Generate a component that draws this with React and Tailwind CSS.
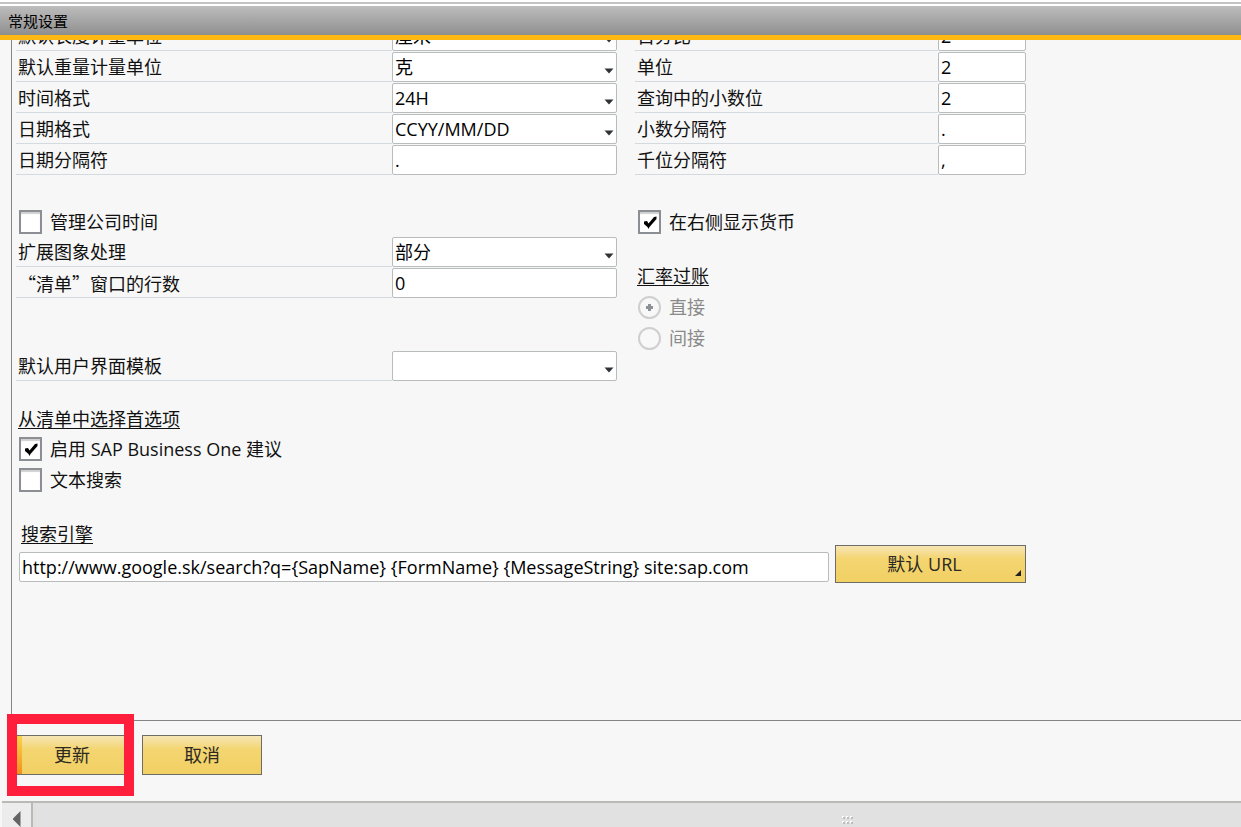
import React from 'react';

const displayRows = [
    { id: 'length_unit', title: '默认长度计量单位', value: '厘米', select: true },
    { id: 'weight_unit', title: '默认重量计量单位', value: '克', select: true },
    { id: 'time_format', title: '时间格式', value: '24H', select: true },
    { id: 'date_format', title: '日期格式', value: 'CCYY/MM/DD', select: true },
    { id: 'date_separator', title: '日期分隔符', value: '.' },
];

const decimalRows = [
    { id: 'percent', title: '百分比', value: '2' },
    { id: 'units', title: '单位', value: '2' },
    { id: 'query_decimals', title: '查询中的小数位', value: '2' },
    { id: 'decimal_separator', title: '小数分隔符', value: '.' },
    { id: 'thousands_separator', title: '千位分隔符', value: ',' },
];

const field = 'block h-[30px] w-full rounded-xs border border-[#b9bcbc] bg-white pl-[2px] text-black outline-none focus:border-[#fdb813]';

function Row({ id, title, value, select, narrow, wide }) {
    return (
        <div className="mb-px flex h-[30px]">
            <label
                htmlFor={id}
                className={`flex-1 border-b border-[#d3dbe1] pl-[2px] leading-[30px] whitespace-nowrap ${wide ? 'font-["Noto_Sans_CJK_SC",sans-serif]' : ''}`}
            >
                {title}
            </label>
            <div className={`relative ${narrow ? 'w-[88px]' : 'w-[225px]'}`}>
                {select ? (
                    <>
                        <select id={id} defaultValue={value} className={`${field} appearance-none`}>
                            <option value={value}>{value}</option>
                        </select>
                        <svg className="pointer-events-none absolute right-[3px] bottom-2" width="10" height="6" viewBox="0 0 10 6">
                            <path d="M0.5 0.5h9L5 5.5z" fill="#2f3237" />
                        </svg>
                    </>
                ) : (
                    <input id={id} type="text" defaultValue={value} className={field} />
                )}
            </div>
        </div>
    );
}

function Check({ id, title, checked }) {
    return (
        <div className="flex h-[30px] items-center gap-2 pl-[3px]">
            <div className="relative h-6 w-[23px]">
                <input
                    id={id}
                    type="checkbox"
                    defaultChecked={checked}
                    className="peer block h-6 w-[23px] appearance-none border-2 border-[#8b8f93] bg-white inset-shadow-[0_2px_1px_#d0d0d0]"
                />
                <svg className="pointer-events-none absolute top-[6px] left-[5px] hidden peer-checked:block" width="14" height="14" viewBox="0 0 14 14">
                    <path d="M1 5.5L4 5L5.5 7.5L11 1L13.5 0.5V3L6.5 11L5.5 13L4.5 11L1 8z" fill="#000" />
                </svg>
            </div>
            <label htmlFor={id}>{title}</label>
        </div>
    );
}

function Radio({ id, title, checked }) {
    return (
        <div className="mb-px flex h-[30px] items-center gap-2 pl-[3px] text-[#8a8a8a]">
            <div className="relative h-[23px] w-[23px]">
                <input
                    id={id}
                    name="rate_posting"
                    type="radio"
                    disabled
                    defaultChecked={checked}
                    className="peer block h-[23px] w-[23px] appearance-none rounded-full border-2 border-[#cfcfcf] bg-[#f8f8f8]"
                />
                <svg className="pointer-events-none absolute top-[7px] left-[7px] hidden peer-checked:block" width="9" height="9" viewBox="0 0 9 9">
                    <path d="M3 1h3v2h2v3H6v2H3V6H1V3h2z" fill="#8d9094" />
                </svg>
            </div>
            <label htmlFor={id}>{title}</label>
        </div>
    );
}

const button = 'relative border border-[#6d6c66] bg-linear-to-b from-[#f6e6b4] via-[#f4d570] via-35% to-[#f1d064] text-[#2c2a22]';

export default function App() {
    return (
        <div className="flex min-h-screen flex-col overflow-hidden bg-[#f7f7f7] font-['Open_Sans','Noto_Sans_CJK_SC',sans-serif] text-[18px] text-[#111]">
            <header className="border-b-5 border-[#fdb813] bg-white">
                <div className="mt-[2px] h-[2px] bg-[#c3c3c3]" />
                <h1 className="mt-[2px] bg-linear-to-b from-[#bdbdbd] to-[#8f8f8f] pt-[2px] pl-2 text-[15px] leading-[27px] text-black">常规设置</h1>
            </header>

            <main className="ml-[11px] flex-1 overflow-hidden border-b border-l border-[#858585] pl-1">
                {/* the list is scrolled, the first row is half hidden under the title */}
                <div className="-mt-[19px] max-w-[1010px]">
                    <div className="grid grid-cols-[601fr_391fr] gap-[18px]">
                        <div>
                            {displayRows.map((row) => <Row key={row.id} {...row} />)}
                            <div className="mt-8">
                                <Check id="company_time" title="管理公司时间" />
                                <Row id="image_processing" title="扩展图象处理" value="部分" select />
                                <Row id="list_rows" title="“清单”窗口的行数" value="0" wide />
                            </div>
                            <div className="mt-[53px]">
                                <Row id="ui_template" title="默认用户界面模板" value="" select />
                            </div>
                        </div>
                        <div>
                            {decimalRows.map((row) => <Row key={row.id} {...row} narrow />)}
                            <div className="mt-8">
                                <Check id="currency_right" title="在右侧显示货币" checked />
                            </div>
                            <fieldset className="mt-6">
                                <legend className="mb-px pl-[2px] leading-[30px] underline underline-offset-2">汇率过账</legend>
                                <Radio id="rate_direct" title="直接" checked />
                                <Radio id="rate_indirect" title="间接" />
                            </fieldset>
                        </div>
                    </div>

                    <h2 className="mt-[22px] pl-[2px] leading-[30px] underline underline-offset-2">从清单中选择首选项</h2>
                    <div className="flex flex-col gap-px">
                        <Check id="suggestions" title="启用 SAP Business One 建议" checked />
                        <Check id="text_search" title="文本搜索" />
                    </div>

                    <label htmlFor="search_url" className="mt-7 block pl-[5px] leading-[22px] underline underline-offset-2">搜索引擎</label>
                    <div className="flex items-center gap-[6px] pl-[3px]">
                        <div className="flex-1 pt-[6px]">
                            <input
                                id="search_url"
                                type="text"
                                className={field}
                                defaultValue="http://www.google.sk/search?q={SapName} {FormName} {MessageString} site:sap.com"
                            />
                        </div>
                        <button type="button" className={`${button} h-[38px] w-[191px] pr-3`}>
                            默认 URL
                            <svg className="absolute right-1 bottom-[6px]" width="6" height="6" viewBox="0 0 6 6">
                                <path d="M6 0v6H0z" fill="#222" />
                            </svg>
                        </button>
                    </div>
                </div>
            </main>

            <footer className="flex h-20 items-start gap-[10px] pt-[14px] pl-3">
                <div className="relative">
                    <button type="button" className={`${button} block h-10 w-[120px]`}>
                        <span className="absolute inset-y-0 left-0 w-[9px] bg-linear-to-b from-[#f8d548] to-[#f08f1c]" />
                        更新
                    </button>
                    <div className="pointer-events-none absolute -inset-y-[21px] -right-[2px] -left-[5px] border-10 border-[#ff1f3d]" />
                </div>
                <button type="button" className={`${button} h-10 w-[120px]`}>取消</button>
            </footer>

            <div className="ml-[2px] flex h-[26px] border-t-2 border-[#b9bab4] bg-[#e1e1e1]">
                <button type="button" aria-label="向左滚动" className="flex w-[31px] items-center justify-center border-r-2 border-[#b9bab4] bg-[#ececec] pt-2 pr-px">
                    <svg width="9" height="16" viewBox="0 0 9 16">
                        <path d="M8.5 0v16L1 8.5v-1z" fill="#636363" />
                    </svg>
                </button>
                <div className="flex flex-1 pt-[13px]">
                    <div className="w-[67%]" />
                    <svg width="11" height="8" viewBox="0 0 11 8">
                        <path d="M0 0h2v2H0zM4 0h2v2H4zM8 0h2v2H8zM0 5h2v2H0zM4 5h2v2H4zM8 5h2v2H8z" fill="#fff" />
                        <path d="M1 1h2v2H1zM5 1h2v2H5zM9 1h2v2H9zM1 6h2v2H1zM5 6h2v2H5zM9 6h2v2H9z" fill="#bdbdbd" />
                    </svg>
                </div>
            </div>
        </div>
    );
}
